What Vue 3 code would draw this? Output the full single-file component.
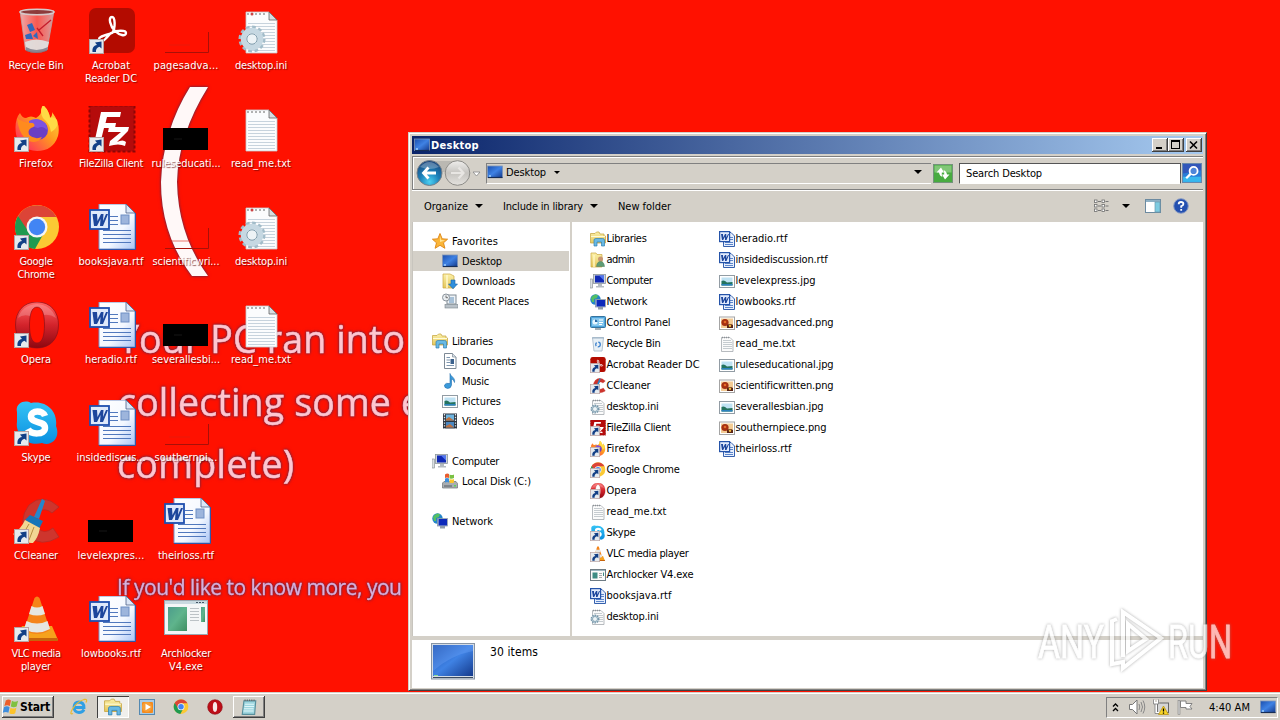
<script setup>
// Sets letter spacing so that a label takes exactly the given width in pixels.
const vFit = (el, { value }) => {
  if (!value) return
  el.style.letterSpacing = '0px'
  const n = el.textContent.length
  const w = el.getBoundingClientRect().width
  el.style.letterSpacing = ((value - w) / n).toFixed(3) + 'px'
}

// icon, shortcut overlay, label lines as [text, width]
const shortcuts = [
  ['bin', 0, [['Recycle Bin', 55]]],
  ['firefox', 1, [['Firefox', 34]]],
  ['chrome', 1, [['Google', 33], ['Chrome', 37]]],
  ['opera', 1, [['Opera', 30]]],
  ['skype', 1, [['Skype', 29]]],
  ['ccleaner', 1, [['CCleaner', 44]]],
  ['vlc', 1, [['VLC media', 49], ['player', 30]]],
  ['acrobat', 1, [['Acrobat', 38], ['Reader DC', 52]]],
  ['filezilla', 1, [['FileZilla Client', 64]]],
  ['word', 0, [['booksjava.rtf', 65]]],
  ['word', 0, [['heradio.rtf', 52]]],
  ['word', 0, [['insidediscus...', 69]]],
  ['black', 0, [['levelexpres...', 67]]],
  ['word', 0, [['lowbooks.rtf', 60]]],
  ['redpic', 0, [['pagesadva...', 65]]],
  ['black', 0, [['ruleseducati...', 69]]],
  ['redpic', 0, [['scientificwri...', 67]]],
  ['black', 0, [['severallesbi...', 68]]],
  ['redpic', 0, [['southernpi...', 63]]],
  ['word', 0, [['theirloss.rtf', 56]]],
  ['exe', 0, [['Archlocker', 50], ['V4.exe', 34]]],
  ['ini', 0, [['desktop.ini', 52]]],
  ['txt', 0, [['read_me.txt', 60]]],
  ['ini', 0, [['desktop.ini', 52]]],
  ['txt', 0, [['read_me.txt', 60]]],
]

const nav = [
  [['star', 'Favorites', 46], ['monitor', 'Desktop', 40, 1], ['downloads', 'Downloads', 53, 1], ['recent', 'Recent Places', 67, 1]],
  [['libs', 'Libraries', 41], ['docs', 'Documents', 54, 1], ['music', 'Music', 27, 1], ['pics', 'Pictures', 39, 1], ['video', 'Videos', 32, 1]],
  [['computer', 'Computer', 47], ['disk', 'Local Disk (C:)', 69, 1]],
  [['network', 'Network', 41]],
]

const files = [
  [
    ['libs', 'Libraries', 40], ['user', 'admin', 28], ['computer', 'Computer', 46], ['network', 'Network', 41],
    ['cpanel', 'Control Panel', 64], ['sbin', 'Recycle Bin', 54], ['acrobat', 'Acrobat Reader DC', 93, 1],
    ['ccleaner', 'CCleaner', 44, 1], ['sini', 'desktop.ini', 52], ['filezilla', 'FileZilla Client', 64, 1],
    ['firefox', 'Firefox', 34, 1], ['chrome', 'Google Chrome', 73, 1], ['opera', 'Opera', 30, 1],
    ['stxt', 'read_me.txt', 60], ['skype', 'Skype', 29, 1], ['vlc', 'VLC media player', 82, 1],
    ['sexe', 'Archlocker V4.exe', 87], ['sword', 'booksjava.rtf', 65], ['sini', 'desktop.ini', 52],
  ],
  [
    ['sword', 'heradio.rtf', 52], ['sword', 'insidediscussion.rtf', 92], ['pics', 'levelexpress.jpg', 80],
    ['sword', 'lowbooks.rtf', 60], ['png', 'pagesadvanced.png', 98], ['stxt', 'read_me.txt', 60],
    ['pics', 'ruleseducational.jpg', 98], ['png', 'scientificwritten.png', 98], ['pics', 'severallesbian.jpg', 88],
    ['png', 'southernpiece.png', 91], ['sword', 'theirloss.rtf', 56],
  ],
]
</script>

<template>
  <div class="screen">
    <svg class="defs" width="0" height="0">
      <defs>
        <linearGradient id="gMon" x1="0" y1="0" x2="1" y2="1"><stop offset="0" stop-color="#1b4fae" /><stop offset=".5" stop-color="#3f82e4" /><stop offset="1" stop-color="#153a8c" /></linearGradient>
        <linearGradient id="gPage" x1="0" y1="0" x2="1" y2="1"><stop offset="0" stop-color="#fff" /><stop offset=".6" stop-color="#f4f8ff" /><stop offset="1" stop-color="#a9c4f5" /></linearGradient>
        <linearGradient id="gOpera" x1="0" y1="0" x2="0" y2="1"><stop offset="0" stop-color="#f66" /><stop offset=".5" stop-color="#d3232b" /><stop offset="1" stop-color="#8d0710" /></linearGradient>
        <linearGradient id="gFox" x1="1" y1="0" x2="0" y2="1"><stop offset="0" stop-color="#ffe14a" /><stop offset=".45" stop-color="#ff9a1f" /><stop offset=".8" stop-color="#ff4450" /><stop offset="1" stop-color="#e8208a" /></linearGradient>
        <linearGradient id="gSky" x1="0" y1="0" x2="0" y2="1"><stop offset="0" stop-color="#35c3f5" /><stop offset="1" stop-color="#0a8fe0" /></linearGradient>
        <linearGradient id="gFold" x1="0" y1="0" x2="0" y2="1"><stop offset="0" stop-color="#fbf0a8" /><stop offset="1" stop-color="#e5c75c" /></linearGradient>
        <linearGradient id="gBin" x1="0" y1="0" x2="1" y2="0"><stop offset="0" stop-color="#e9e2e6" stop-opacity=".75" /><stop offset=".5" stop-color="#f0b0b4" stop-opacity=".45" /><stop offset="1" stop-color="#c9d0d6" stop-opacity=".75" /></linearGradient>
        <linearGradient id="gGreen" x1="0" y1="0" x2="1" y2="1"><stop offset="0" stop-color="#4c9d8c" /><stop offset=".5" stop-color="#5fb48c" /><stop offset="1" stop-color="#3f8f62" /></linearGradient>
        <radialGradient id="gBack" cx=".5" cy=".85" r=".8"><stop offset="0" stop-color="#4cd0f2" /><stop offset=".5" stop-color="#1c7fb8" /><stop offset="1" stop-color="#1d4a80" /></radialGradient>
        <linearGradient id="gFwd" x1="0" y1="0" x2="0" y2="1"><stop offset="0" stop-color="#efeeec" /><stop offset=".5" stop-color="#c6c4c0" /><stop offset="1" stop-color="#e4e2de" /></linearGradient>
      </defs>

      <symbol id="lnk" viewBox="0 0 15 15"><rect x=".5" y=".5" width="14" height="14" fill="#e6eaee" stroke="#b9a3a3" /><path d="M3.500 13C3 9 4.500 6.500 8 6L6 3.500 12.500 2.500 12.500 9.500 10.500 7.800C8 8.500 6.500 10.500 7 13Z" fill="#123f86" /></symbol>

      <symbol id="bin" viewBox="0 0 48 48">
        <path d="M7 3L12.500 42Q23 47 34 42L41 3Z" fill="url(#gBin)" stroke="#b9a4a6" stroke-width=".8" />
        <path d="M12 34Q23 29 36 34L34 42Q23 46 13 42Z" fill="#dfe6e4" opacity=".9" />
        <path d="M13 39Q23 45 35 39L34 43Q23 47 13 43Z" fill="#667" opacity=".7" />
        <ellipse cx="24" cy="4" rx="17" ry="2.800" fill="#8d3b3b" stroke="#d5c9ca" stroke-width="1.600" />
        <path d="M14 17L19 15 22 22 17 24ZM12 27L18 25 20 31 13 31ZM20 28L24 24 25 31Z" fill="#3069bd" /><path d="M26 22L38 12M24 20L30 28" stroke="#c51c2c" stroke-width="1.300" />
      </symbol>

      <symbol id="firefox" viewBox="0 0 48 48">
        <path d="M7 7Q9 12 13 12Q18 9 23 12Q29 9 30 -1Q36 5 37 12Q40 9 39 6Q48 18 45 30Q40 45 24 45Q6 44 3 28Q1 14 7 7Z" fill="url(#gFox)" />
        <path d="M30 -1Q26 5 30 12Q37 18 38 26Q46 22 44 14Q41 10 37 12Q36 4 30 -1Z" fill="#ffdb45" />
        <circle cx="25" cy="24" r="10" fill="#6b3fc4" /><path d="M16 15Q25 10 33 18L35 25Q30 19 25 22Q19 20 16 21Z" fill="#7c52e0" />
        <path d="M4 12Q10 17 20 17Q24 20 18 22Q14 25 16 29Q22 34 29 31Q25 38 16 35Q6 30 4 12Z" fill="#ff8b1e" />
      </symbol>

      <symbol id="chrome" viewBox="0 0 48 48">
        <circle cx="24" cy="23" r="22" fill="#fbc934" />
        <path d="M24 23L5 12A22 22 0 0 0 22 45L32 27Z" fill="#1f9a50" />
        <path d="M5 12A22 22 0 0 1 43.500 13H24L15 27Z" fill="#dc4437" />
        <circle cx="24" cy="23" r="10.500" fill="#f5f5f5" /><circle cx="24" cy="23" r="8.200" fill="#4285f4" />
      </symbol>

      <symbol id="opera" viewBox="0 0 48 48">
        <path fill-rule="evenodd" d="M24 0C38 0 45.500 10 45.500 23S38 46 24 46 2.500 36 2.500 23 10 0 24 0ZM24 5C18.500 5 16.500 13 16.500 23S18.500 41 24 41 31.500 33 31.500 23 29.500 5 24 5Z" fill="url(#gOpera)" stroke="#8c1018" stroke-width=".7" />
        <path d="M5 16Q9 3 24 2Q38 3 43 16Q37 12 31 13Q29 5 24 5Q18 5 17 14Q10 12 5 16Z" fill="#fff" opacity=".2" />
      </symbol>
      <symbol id="opera16" viewBox="0 0 16 16"><circle cx="8" cy="8" r="7.300" fill="#bd0e18" stroke="#8c0810" stroke-width=".6" /><ellipse cx="8" cy="8" rx="2.200" ry="4.900" fill="#f8e8e8" /></symbol>

      <symbol id="skype" viewBox="0 0 48 48">
        <path d="M4 12C2 4 11 -1 18 3C34 0 45 12 43 26C48 38 38 47 29 43C14 47 2 34 4 22Z" fill="url(#gSky)" />
        <path d="M32 16C30 10 18 10 18 16.500C18 24 32 20 32 28C32 35 18 35 15 29" fill="none" stroke="#fff" stroke-width="6.500" />
      </symbol>

      <symbol id="ccleaner" viewBox="0 0 48 48">
        <path d="M46 9Q30 -6 16 7Q4 23 15 38Q28 50 46 39L40 30Q31 37 25 30Q20 21 26 14Q32 9 39 15Z" fill="#ce352d" stroke="#b92a24" stroke-width=".8" />
        <path d="M29 1L32 3 26 21 21 19Z" fill="#2486cc" /><path d="M17 17L30 23 26 31 12 22Z" fill="#1775b8" />
        <path d="M12 22Q8 31 0 36Q10 46 20 45Q25 40 27 30Z" fill="#f2d794" /><path d="M16 26L9 38M21 29L16 42" stroke="#b78d41" stroke-width="1" />
      </symbol>

      <symbol id="vlc" viewBox="0 0 48 48">
        <path d="M9 30L3 44H45L39 30Z" fill="#f6a21c" /><path d="M3 42H44.500L45 45H3Z" fill="#c7640c" />
        <path d="M21.500 2Q24 -1 26.500 2L37 34Q24 42 11 34Z" fill="#f5841a" />
        <path d="M18.500 10Q24 13 29.500 10L32 18Q24 21 16 18ZM13.500 25Q24 30 34.500 25L37 33Q24 40 11 33Z" fill="#e6e6e2" />
      </symbol>

      <symbol id="acrobat" viewBox="0 0 48 48">
        <rect x="1" y="0" width="46" height="45" rx="7" fill="#b30b00" />
        <path d="M12 32C8 29 19 27 24 25C28 20 27 9 24 9C20 9 22 18 27 23C31 27 38 29 38 25C38 22 29 22 23 25C18 30 14 36 12 32Z" fill="none" stroke="#fff" stroke-width="2.400" />
      </symbol>

      <symbol id="filezilla" viewBox="0 0 48 48">
        <rect x="1.500" y="-.5" width="45" height="46" fill="#b50b0b" stroke="#8d0606" stroke-width="2" stroke-dasharray="3 2" />
        <path d="M13 6H33L32 11H19L17.500 17H28L27 22H16L12 38H6Z" fill="#fff" />
        <path d="M21 21H41L40 25 29 36Q35 33 38 36L37 40Q31 37 21 40L22 35 33 26H20Z" fill="#fff" />
      </symbol>

      <symbol id="word" viewBox="0 0 48 48">
        <path d="M11 0H38L47 9V45H11Z" fill="url(#gPage)" stroke="#7a94c8" /><path d="M38 0V9H47Z" fill="#dce6f6" stroke="#4c5f88" stroke-width=".8" /><path d="M11 45.500H47.500V9" fill="none" stroke="#2e58ab" />
        <path d="M22 12.500H30M22 16.500H30M22 20.500H30M15 26.500H43M15 30.500H43M15 34.500H43M15 38.500H43" stroke="#5078bd" /><rect x="33" y="11" width="8" height="9" fill="#9db5dc" stroke="#6f8fc4" />
        <rect x="2" y="6" width="19" height="19" fill="#dfe9fb" stroke="#1f4fae" stroke-width="1.800" />
        <path d="M4.500 10H9L9.500 17 13 10H15.500L15 17 18 10H20L15 22H12L12.500 15 9 22H6Z" fill="#1d469c" />
      </symbol>

      <symbol id="txt" viewBox="0 0 48 48">
        <path d="M8 4H31L39 12V45H8Z" fill="#fbfcfd" stroke="#c5c9cc" stroke-width=".8" /><path d="M31 4V12H39Z" fill="#d8dcdf" stroke="#555" stroke-width=".7" />
        <path d="M10 15.500H37M10 18.500H37M10 21.500H37M10 24.500H37M10 27.500H37M10 30.500H37M10 33.500H37M10 36.500H37M10 39.500H37M10 42.500H37" stroke="#c7d3dd" />
        <path d="M10 5V7M14 5V7M18 5V7M22 5V7M26 5V7" stroke="#999" stroke-width="1.500" />
      </symbol>
      <symbol id="ini" viewBox="0 0 48 48">
        <use href="#txt" width="48" height="48" /><circle cx="14" cy="6" r="1.500" fill="#c44" />
        <circle cx="14" cy="31" r="11.500" fill="none" stroke="#a2bcc9" stroke-width="4" stroke-dasharray="3.500 2.500" /><circle cx="14" cy="31" r="8.500" fill="none" stroke="#c6d8e2" stroke-width="5.500" /><circle cx="14" cy="31" r="5.200" fill="#edf3f6" stroke="#7f9dad" />
      </symbol>
      <symbol id="black" viewBox="0 0 48 48"><rect x="0" y="22" width="45" height="22" /><path d="M11 33H19" stroke="#171717" /></symbol>
      <symbol id="redpic" viewBox="0 0 48 48"><path d="M45.500 24V44.500H2" fill="none" stroke="#a81008" /><path d="M6 37H27" stroke="#dc2012" stroke-width="1.500" opacity=".4" /></symbol>
      <symbol id="exe" viewBox="0 0 48 48">
        <rect x="1.500" y="4.500" width="43" height="34" fill="#f4f6f7" stroke="#9aa5ae" /><rect x="2" y="5" width="42" height="3" fill="#c9d9e0" /><path d="M33 6.500H42" stroke="#456" stroke-dasharray="2 1" />
        <rect x="5" y="11" width="19" height="24" fill="url(#gGreen)" /><path d="M27 12.500H36M27 15.500H36M27 18.500H36M27 21.500H36M27 24.500H36" stroke="#bcc2c6" /><rect x="38" y="11" width="4" height="15" fill="url(#gGreen)" />
      </symbol>

      <symbol id="monitor" viewBox="0 0 16 16"><rect x=".5" y="2" width="15" height="11.500" fill="url(#gMon)" stroke="#7f96b8" stroke-width=".8" /><path d="M1 13.500H15.500" stroke="#162d55" stroke-width="1.200" /><path d="M2 12H4" stroke="#9fd0ff" stroke-width="1.500" /></symbol>
      <symbol id="star" viewBox="0 0 16 16"><path d="M8 .5L10.200 5.800 15.600 6.200 11.500 9.800 12.900 15.300 8 12.300 3.100 15.300 4.500 9.800 .4 6.200 5.800 5.800Z" fill="#fbb638" stroke="#dc8414" stroke-width=".9" /><path d="M8 3L9 7 13 7.500 8 9Z" fill="#ffe69a" /></symbol>
      <symbol id="downloads" viewBox="0 0 16 16"><path d="M1 1H8L12 3V15H1Z" fill="url(#gFold)" stroke="#caa640" stroke-width=".7" /><path d="M5 2V15" stroke="#fff8cf" stroke-width="1.500" /><path d="M9 7H13V11H15.500L11 15.800 6.500 11H9Z" fill="#2f8fdd" stroke="#1a62a5" stroke-width=".6" /></symbol>
      <symbol id="recent" viewBox="0 0 16 16"><rect x="5" y="2" width="9" height="9" fill="#eef3f7" stroke="#808b95" /><path d="M7 5H12M7 7H12M7 9H12" stroke="#608eb8" /><rect x="3" y="11.500" width="13" height="3.500" fill="#b9c1c8" stroke="#7b858d" stroke-width=".6" /><circle cx="4" cy="4.500" r="3.500" fill="#e9edf0" stroke="#8b949c" /><path d="M4 2.500V4.700H6" fill="none" stroke="#555" stroke-width=".8" /></symbol>
      <symbol id="libs" viewBox="0 0 16 16"><path d="M.5 2.500H5L6.500 1H9L10 3H14V5H15.500V12H.5Z" fill="url(#gFold)" stroke="#c9a949" stroke-width=".8" /><path d="M1 5.500H15" stroke="#fffbd8" /><path d="M4 15V9Q4 7.500 6 7.500H12.500Q14.500 7.500 14.500 9V15H11.500V11H7V15Z" fill="#68b9e4" stroke="#3180b2" stroke-width=".7" /></symbol>
      <symbol id="docs" viewBox="0 0 16 16"><path d="M2.500 .5H10.500L14 4V15.500H2.500Z" fill="#fff" stroke="#7d8995" /><path d="M10.500 .5V4H14" fill="#d8e0e8" stroke="#7d8995" stroke-width=".7" /><path d="M4.500 4.500H8M4.500 7H8M4.500 9.500H8M4.500 12.500H12" stroke="#7e97b0" /><rect x="8.500" y="6" width="3.500" height="5" fill="#3b618c" /></symbol>
      <symbol id="music" viewBox="0 0 16 16"><path d="M8 .5C9 4 13.500 4.500 12.500 9.500Q11.500 6 9.500 6V12Q9 15.500 5.500 15.500Q2 15 2.500 12Q3.500 9.500 8 10.500Z" fill="#3b9ada" stroke="#236fae" stroke-width=".6" /></symbol>
      <symbol id="pics" viewBox="0 0 16 16"><rect x=".5" y="2.500" width="15" height="12" fill="#fff" stroke="#929ca4" /><rect x="2.500" y="4.500" width="11" height="8" fill="#bfe2f3" /><path d="M2.500 8Q5 6.500 8 9.500L13.500 9V12.500H2.500Z" fill="#24735d" /><path d="M2.500 11H13.500V12.500H2.500Z" fill="#2c82bf" /></symbol>
      <symbol id="video" viewBox="0 0 16 16"><rect x="1" y=".5" width="14" height="15" fill="#2d3540" /><path d="M2.500 1V15.500M13.500 1V15.500" stroke="#e3e9ee" stroke-width="1.300" stroke-dasharray="1.400 1.400" /><rect x="4" y="1.500" width="8" height="6" fill="#6eb4df" /><rect x="4" y="9" width="8" height="5.500" fill="#4a88c2" /><path d="M4 6L7 4 12 7.500H4ZM4 13L8 11 12 14.500H4Z" fill="#bf713f" /></symbol>
      <symbol id="computer" viewBox="0 0 16 16"><rect x="0" y="6" width="2.500" height="9" fill="#dce0e3" stroke="#7d858b" stroke-width=".6" /><rect x="3.500" y="1.500" width="12" height="9" fill="#ced5da" stroke="#8d969d" stroke-width=".8" /><rect x="5" y="2.500" width="9" height="7" fill="#1029b5" /><path d="M9 2.500H14V7.500Z" fill="#5277ef" /><path d="M8 11H12V13H14V14.500H6V13H8Z" fill="#b5bcc1" /></symbol>
      <symbol id="network" viewBox="0 0 16 16"><circle cx="5.500" cy="5.500" r="5.200" fill="#2484c9" /><path d="M1 4Q4 -1 8 1L7 4 4 5 4 8 2 8ZM6 6L9 5V9Z" fill="#54c064" /><rect x="5.500" y="5.500" width="10" height="7.500" fill="#d0dae2" stroke="#8190a0" stroke-width=".7" /><rect x="6.500" y="6" width="8.500" height="6.500" fill="#0d2abb" /><path d="M8 13H13V15.500H8Z" fill="#8f9cab" /></symbol>
      <symbol id="disk" viewBox="0 0 16 16"><path d="M.5 10L2 8.500H14L15.500 10.500V15H.5Z" fill="#a9adb1" stroke="#6c7276" stroke-width=".7" /><path d="M2 13H10" stroke="#555d62" /><rect x="12" y="12" width="2" height="1.500" fill="#59d854" /><path d="M3 1.500Q5 0 7 1V5Q5 4 3 5Z" fill="#e95c2e" /><path d="M7.500 1.500Q10 2.500 12 1.500V5Q10 6 7.500 5.500Z" fill="#7ac143" /><path d="M3 5.500Q5 4.500 7 5.500V9.500Q5 8.500 3 9.500Z" fill="#3c8fdd" /><path d="M7.500 6Q10 7 12 6V9.500Q10 10.500 7.500 9.500Z" fill="#fcc52b" /></symbol>
      <symbol id="user" viewBox="0 0 16 16"><path d="M1 1H6L7 2.500H12V15H1Z" fill="url(#gFold)" stroke="#caa640" stroke-width=".7" /><path d="M4 3V15" stroke="#fff6c0" stroke-width="1.500" /><circle cx="10.500" cy="7" r="2.500" fill="#c99570" /><path d="M6.500 14.500Q7 9.500 10.500 9.500T14.500 14.500Z" fill="#5e9c76" stroke="#4a7c5e" stroke-width=".5" /></symbol>
      <symbol id="cpanel" viewBox="0 0 16 16"><rect x=".5" y="1.500" width="15" height="11" rx="1" fill="#4fa4dc" stroke="#35749f" /><rect x="2" y="3" width="12" height="8" fill="#85c7ee" /><circle cx="5" cy="7" r="2.500" fill="#e8f6ff" /><path d="M5 7V4.500A2.500 2.500 0 0 1 7.500 7Z" fill="#2869a5" /><path d="M9 5H13M9 7.500H13M9 9.500H12" stroke="#fff" /><path d="M5 13H11V15H5Z" fill="#a3aeb6" /></symbol>
      <symbol id="sbin" viewBox="0 0 16 16"><path d="M2.500 1.500L4 15H12L13.500 1.500Z" fill="#e8f0f6" stroke="#b4c4d2" /><path d="M2 2H14" stroke="#9db2c4" /><circle cx="8" cy="8.500" r="2.300" fill="none" stroke="#3f83cf" stroke-width="1.300" stroke-dasharray="3.500 1.500" /></symbol>
      <symbol id="stxt" viewBox="0 0 16 16"><path d="M2.500 1.500H11L14 4.500V15.500H2.500Z" fill="#fbfbfb" stroke="#a5aaae" stroke-width=".8" /><path d="M4 4.500H12M4 6.500H13M4 8.500H13M4 10.500H13M4 12.500H13" stroke="#b9c0c5" stroke-width=".8" /><path d="M3 1.500H11" stroke="#8c9196" stroke-dasharray="1 1" stroke-width="1.500" /></symbol>
      <symbol id="sini" viewBox="0 0 16 16"><use href="#stxt" width="16" height="16" /><circle cx="5" cy="10" r="3.600" fill="#eef5f8" stroke="#7596aa" stroke-width="1.700" stroke-dasharray="1.500 .8" /><circle cx="5" cy="10" r="2.500" fill="#eef4f7" stroke="#86a5b6" /></symbol>
      <symbol id="sword" viewBox="0 0 16 16"><path d="M4.500 1.500H12L15.500 5V15.500H4.500Z" fill="#e7effd" stroke="#3560ad" /><path d="M10 6.500H14M10 8.500H14M6 11.500H14M6 13.500H14" stroke="#5d86ca" /><rect x=".6" y=".6" width="10" height="10" fill="#e2ebfd" stroke="#2453a9" stroke-width="1.200" /><path d="M2 3H4L4.200 6.500 6 3H7.300V6.500L9 3H10L7.500 9H6V5.800L4.200 9H3Z" fill="#1d469c" /></symbol>
      <symbol id="sexe" viewBox="0 0 16 16"><rect x=".5" y="2.500" width="15" height="11" fill="#fbfbfb" stroke="#6f7c84" /><path d="M1 3.500H15" stroke="#9eb7c2" /><rect x="2.500" y="5.500" width="5" height="6" fill="#3d8c84" /><path d="M9 6.500H12M9 8.500H12M9 10.500H12" stroke="#aaa" /><path d="M13.500 5.500V9" stroke="#3d8c84" /></symbol>
      <symbol id="png" viewBox="0 0 16 16"><rect x=".5" y="2" width="15" height="12.500" fill="#fff" stroke="#a4a4a4" /><rect x="2" y="3.500" width="12" height="9.500" fill="#f3cb94" /><circle cx="6" cy="7.500" r="3.600" fill="#a52f12" /><circle cx="6" cy="7" r="1.300" fill="#e46c27" /><path d="M8 10Q11 8 14 10V13H8Z" fill="#5a2414" /><circle cx="11" cy="10.800" r="1.200" fill="#f2ba3b" /></symbol>

      <symbol id="flag4" viewBox="0 0 18 18"><path d="M4 2Q7 0 9.500 2L8.300 8Q5.500 6.500 2.500 8Z" fill="#ec5f2b" /><path d="M10.500 2.500Q13.500 4.500 17 2.500L15.500 8.500Q12.500 10 9.300 8.500Z" fill="#7fc142" /><path d="M2.200 9Q5.500 7.500 8 9.200L6.800 15Q4 13.500 .8 15Z" fill="#3e8edd" /><path d="M9 9.700Q12 11.500 15.200 9.700L14 15.500Q11 17.300 7.800 15.500Z" fill="#fcc32a" /></symbol>
      <symbol id="ie" viewBox="0 0 18 18"><path d="M14 11.500Q12.500 14.500 9 14.500Q4 14 4 9Q4.500 4 9 4Q14 4.500 14 9.500H5" fill="none" stroke="#2f9fe4" stroke-width="2.800" /><path d="M3 15.500Q-1 17 2.500 11Q7 3.500 14 1.500Q18 .5 16 4.500" fill="none" stroke="#e8ba32" stroke-width="1.300" /></symbol>
      <symbol id="wmp" viewBox="0 0 16 16"><rect x=".5" y=".5" width="15" height="15" fill="#aacbe5" stroke="#5489b1" /><rect x="3" y="3" width="11" height="11" rx="1" fill="#f48b1f" /><circle cx="8" cy="8" r="5" fill="#f79f38" /><path d="M6.500 4.800L12 8 6.500 11.200Z" fill="#fff" /></symbol>
      <symbol id="pad" viewBox="0 0 16 16"><path d="M3.500 2.500H14L13 14.500H2Z" fill="#9ed6df" stroke="#588f9c" /><path d="M4.500 5.500H12.500M4 7.500H12.500M3.500 9.500H12M3 11.500H12" stroke="#dff6f9" /><path d="M4 2H14" stroke="#666" stroke-dasharray="1 1" stroke-width="1.500" /></symbol>
      <symbol id="help" viewBox="0 0 16 16"><circle cx="8" cy="8" r="7.300" fill="#2450b0" stroke="#8a9cc4" /><path d="M5.700 6.300Q5.700 4 8 4T10.400 6Q10.400 7.200 8.200 8.200V9.800M8.200 11V12.800" fill="none" stroke="#fff" stroke-width="1.800" /></symbol>
    </svg>

    <div class="wallpaper glow">
      <svg viewBox="0 0 1280 720">
        <path class="paren" d="M190 87H208Q178 135 177 182Q178 235 208 276H192Q161 235 161 182Q163 130 190 87Z" />
        <g class="bsod">
          <text x="118" y="353" textLength="287" font-size="37.500">Your PC ran into</text>
          <text x="118" y="416" textLength="304" font-size="37.500">collecting some e</text>
          <text x="117" y="478" textLength="177" font-size="37.500">complete)</text>
          <text class="small" x="117" y="595" textLength="285" font-size="21">If you'd like to know more, you</text>
        </g>
      </svg>
    </div>

    <main class="desktop">
      <div v-for="(s, i) in shortcuts" :key="i" class="shortcut">
        <svg class="i48" viewBox="0 0 48 48">
          <use :href="'#' + s[0]" width="48" height="48" />
          <use v-if="s[1]" href="#lnk" x="1" y="31" width="15" height="15" />
        </svg>
        <div v-for="l in s[2]" :key="l[0]" class="line"><span v-fit="l[1]">{{ l[0] }}</span></div>
      </div>
    </main>

    <section class="window">
      <header class="title">
        <svg class="i16"><use href="#monitor" /></svg>
        <b v-fit="48">Desktop</b>
        <div class="caption">
          <button class="min"><i /></button>
          <button class="max"><i /></button>
          <button class="close"><svg viewBox="0 0 9 8"><path d="M1 .5L8 7.500M8 .5L1 7.500" /></svg></button>
        </div>
      </header>

      <div class="navbar">
        <svg class="arrows" viewBox="0 0 70 30">
          <rect x="14" y="3" width="30" height="11" fill="#bab8b2" />
          <circle cx="14.500" cy="15" r="12.500" fill="url(#gBack)" stroke="#747f8a" /><path d="M13.500 9.500L8.500 15 13.500 20.500M9 15H21" fill="none" stroke="#fff" stroke-width="2.800" />
          <path d="M5 9Q14 -1 24 9Q15 13 5 9Z" fill="#fff" opacity=".28" />
          <circle cx="42.500" cy="15" r="12.300" fill="url(#gFwd)" stroke="#8d8c88" /><path d="M43.500 9.500L48.500 15 43.500 20.500M48 15H36" fill="none" stroke="#e8e6e3" stroke-width="2.200" />
          <path d="M58 14H65L61.500 18Z" fill="#fff" stroke="#858585" stroke-width=".8" />
        </svg>
        <div class="address">
          <svg class="i16"><use href="#monitor" /></svg>
          <span v-fit="40">Desktop</span><i class="tri sm" />
          <i class="tri drop" />
        </div>
        <svg class="refresh" viewBox="0 0 20 19"><rect x=".5" y=".5" width="19" height="18" fill="#48ab40" stroke="#74937b" /><rect x="1.500" y="1.500" width="17" height="7" fill="#9fd595" opacity=".65" /><path d="M8 3.500L3.500 8.500H6Q6.500 12 9.500 13Q8.500 11 8.800 8.500H11ZM12 15.500L16.500 10.500H14Q13.500 7 10.500 6Q11.500 8 11.200 10.500H9Z" fill="#fff" /></svg>
        <div class="search"><span v-fit="76">Search Desktop</span></div>
        <svg class="go" viewBox="0 0 19 19"><rect x=".5" y=".5" width="18" height="18" fill="#2a7dd8" stroke="#6787ad" /><path d="M1 13H18V18H1Z" fill="#38b7ee" /><path d="M1 1H18V7L1 10Z" fill="#3257ba" /><circle cx="11" cy="7.500" r="3.800" fill="#4f86d9" stroke="#fff" stroke-width="1.700" /><path d="M8.200 10.300L4 14.500" stroke="#fff" stroke-width="2.200" /></svg>
      </div>

      <div class="toolbar">
        <span v-fit="44">Organize</span><i class="tri" />
        <span v-fit="80" class="gap">Include in library</span><i class="tri" />
        <span v-fit="53" class="gap">New folder</span>
        <div class="tools">
          <svg class="i16" viewBox="0 0 16 16"><g fill="#fff" stroke="#6e6e6e" stroke-width=".8"><rect x="1.500" y="2" width="2.500" height="2.500" /><rect x="1.500" y="6.500" width="2.500" height="2.500" /><rect x="1.500" y="11" width="2.500" height="2.500" /><rect x="9" y="2" width="2.500" height="2.500" /><rect x="9" y="6.500" width="2.500" height="2.500" /><rect x="9" y="11" width="2.500" height="2.500" /></g><path d="M5 3.500H8M5 8H8M5 12.500H8M12.500 3.500H15.500M12.500 8H15.500M12.500 12.500H15.500" stroke="#777" /></svg>
          <i class="tri" />
          <svg class="i16 pane" viewBox="0 0 16 16"><rect x=".5" y="1.500" width="15" height="13" fill="#fff" stroke="#6c8aa0" /><path d="M1 3H15" stroke="#8fb0c4" stroke-width="2" /><rect x="10" y="4" width="5" height="10" fill="#7ecbe0" stroke="#6a98ac" stroke-width=".7" /></svg>
          <svg class="i16 hp"><use href="#help" /></svg>
        </div>
      </div>

      <div class="body">
        <nav class="side">
          <ul v-for="(g, gi) in nav" :key="gi">
            <li v-for="n in g" :key="n[1]" :class="{ child: n[3], on: n[1] === 'Desktop' }">
              <svg class="i16"><use :href="'#' + n[0]" /></svg><span v-fit="n[2]">{{ n[1] }}</span>
            </li>
          </ul>
        </nav>
        <div class="files">
          <ul v-for="(c, ci) in files" :key="ci">
            <li v-for="(f, fi) in c" :key="fi">
              <svg class="i16" viewBox="0 0 48 48">
                <use :href="'#' + f[0]" width="48" height="48" />
                <use v-if="f[3]" href="#lnk" x="0" y="18" width="30" height="30" />
              </svg><span v-fit="f[2]">{{ f[1] }}</span>
            </li>
          </ul>
        </div>
      </div>

      <footer class="details">
        <svg viewBox="0 0 44 37"><rect x=".5" y=".5" width="43" height="35.500" fill="#d4dce6" stroke="#8794a4" /><rect x="2" y="2" width="40" height="31" fill="url(#gMon)" /><path d="M2 2H42V8Q20 12 2 28Z" fill="#7db0ff" opacity=".28" /><path d="M2 34.500H42" stroke="#3b4a5f" /><path d="M3 32.500H7" stroke="#8bdb9a" /></svg>
        <span v-fit="48">30 items</span>
      </footer>
    </section>

    <footer class="taskbar">
      <button class="start"><svg viewBox="0 0 18 18"><use href="#flag4" /></svg><b v-fit="30">Start</b></button>
      <div class="quick">
        <div class="cell"><svg class="i18"><use href="#ie" /></svg></div>
        <div class="cell pressed"><svg class="i18"><use href="#libs" /></svg></div>
        <div class="cell"><svg class="i16"><use href="#wmp" /></svg></div>
        <div class="cell"><svg class="i16"><use href="#chrome" /></svg></div>
        <div class="cell"><svg class="i16"><use href="#opera16" /></svg></div>
        <div class="cell raised"><svg class="i18"><use href="#pad" /></svg></div>
      </div>
      <div class="tray">
        <svg class="chev" viewBox="0 0 7 9"><path d="M1 3.500L3.500 1 6 3.500M1 8L3.500 5.500 6 8" fill="none" stroke="#000" stroke-width="1.300" /></svg>
        <svg class="i16 t1" viewBox="0 0 16 16"><path d="M.5 5.500H3.500L8 1V15L3.500 10.500H.5Z" fill="#fff" stroke="#777" /><path d="M10 5Q11.500 8 10 11M12 3Q15 8 12 13M14 1.500Q17.500 8 14 14.500" fill="none" stroke="#888" /></svg>
        <svg class="i16 t2" viewBox="0 0 16 16"><rect x="4.500" y="4" width="11" height="9.500" fill="#d5d5d5" stroke="#666" /><path d="M1 1V4H5V1M3 4V14H7" fill="none" stroke="#fff" stroke-width="2.200" /><path d="M.5 .5V5H5.500V.5M2 5V14.500H6" fill="none" stroke="#777" stroke-width=".8" /><path d="M10.500 7L15.500 15.500H5.500Z" fill="#f8d527" stroke="#b38b08" stroke-width=".7" /><path d="M10.500 9.500V12.500M10.500 13.500V14.700" stroke="#000" stroke-width="1.300" /></svg>
        <svg class="i16 t3" viewBox="0 0 16 16"><path d="M2 1V15.500" stroke="#777" stroke-width="2.500" /><path d="M2 1.500V15" stroke="#fff" /><path d="M3.500 2H9V4.500H15L13 7.500 15 10H9V8.500H3.500Z" fill="#fff" stroke="#777" stroke-width=".9" /></svg>
        <span v-fit="41">4:40 AM</span>
        <svg class="i16 t4"><use href="#monitor" /></svg>
      </div>
    </footer>

    <svg class="mark" viewBox="0 0 210 72">
      <text x="8" y="53" textLength="66" lengthAdjust="spacingAndGlyphs">ANY</text>
      <text x="138" y="53" textLength="64" lengthAdjust="spacingAndGlyphs">RUN</text>
      <path d="M93 52V7L131 33 93 63V57L82 59V16L87 14" /><path d="M98 19V46L116 34Z" />
    </svg>
  </div>
</template>

<style>
html, body { margin: 0; overflow: hidden; background: #ff1100; }
</style>

<style scoped>
.screen { position: relative; width: 1280px; height: 720px; overflow: hidden; background: #ff1100; font: 11px/13px "DejaVu Sans Condensed", "DejaVu Sans", "Liberation Sans", sans-serif; font-stretch: condensed; color: #000; cursor: default; }
span, b { white-space: nowrap; }
svg { display: block; flex: none; overflow: visible; }
ul { margin: 0; padding: 0; list-style: none; }
button { border: 0; padding: 0; font: inherit; }
.defs { position: absolute; }
.i16 { width: 16px; height: 16px; }
.i18 { width: 18px; height: 18px; }
.i48 { width: 48px; height: 48px; margin: 0 0 3px 14px; }

.wallpaper { position: absolute; inset: 0; font-family: "Open Sans", "Noto Sans", sans-serif; font-stretch: normal; }
.wallpaper svg { width: 1280px; height: 720px; }
.glow { filter: blur(.7px) drop-shadow(0 0 1px rgba(70, 50, 90, .8)) drop-shadow(0 0 1.500px rgba(110, 30, 60, .6)); }
.paren { fill: #fff8f8; }
.bsod { fill: #ffc6d0; stroke: #ffc6d0; stroke-width: .5; }
.small { fill: #d8b0dc; stroke: #d8b0dc; stroke-width: .3; }

.desktop { position: absolute; left: -1px; top: 0; display: grid; grid-auto-flow: column; grid-template-rows: repeat(7, 98px); grid-auto-columns: 75px; }
.shortcut { padding-top: 8px; color: #fff; text-shadow: 1px 1px 1px rgba(90, 0, 0, .7); }
.line { display: flex; justify-content: center; height: 13px; margin-right: 1px; }

.window { position: absolute; left: 408px; top: 132px; width: 799px; height: 559px; box-sizing: border-box; padding: 3px 2px 2px 3px; display: flex; flex-direction: column; background: #d4d0c8; border: 1px solid #d4d0c8; border-right-color: #404040; border-bottom-color: #404040; box-shadow: inset 1px 1px #fff, inset -1px -1px #808080; }
.title { display: flex; align-items: center; height: 18px; margin-right: 1px; padding-left: 2px; background: linear-gradient(90deg, #0a246a, #a6caf0); color: #fff; }
.title b { margin-left: 1px; }
.caption { display: flex; margin-left: auto; padding-right: 1px; }
.caption button { position: relative; width: 16px; height: 14px; background: #d4d0c8; box-shadow: inset -1px -1px #404040, inset 1px 1px #fff, inset -2px -2px #808080; }
.caption .close { margin-left: 2px; }
.caption svg { width: 9px; height: 8px; margin: -1px 0 0 3px; fill: none; stroke: #000; stroke-width: 1.600; }
.min i { position: absolute; left: 4px; bottom: 3px; width: 6px; height: 2px; background: #000; }
.max i { position: absolute; left: 3px; top: 2px; width: 9px; height: 9px; box-sizing: border-box; border: 1px solid #000; border-top-width: 2px; }
.navbar { display: flex; align-items: center; height: 34px; margin: 2px 1px 0 0; box-sizing: border-box; border: 1px solid #808080; border-right: 0; box-shadow: inset 1px 1px #fff, 0 1px #fff; padding-left: 2px; }
.arrows { width: 70px; height: 30px; }
.address { display: flex; align-items: center; width: 445px; height: 21px; margin-left: 1px; box-sizing: border-box; border: 1px solid #808080; border-right: 0; border-bottom-color: #fff; padding-bottom: 2px; }
.address span { margin-left: 3px; }
.address .drop { margin: 0 9px 0 auto; }
.tri { width: 0; height: 0; border: 4px solid transparent; border-top-color: #000; border-bottom: 0; }
.tri.sm { border-width: 3px 3px 0; margin-left: 8px; }
.refresh { width: 20px; height: 19px; margin-left: 2px; }
.search { display: flex; align-items: center; width: 222px; height: 21px; margin-left: 6px; box-sizing: border-box; padding-left: 6px; background: #fff; border: 1px solid #fff; border-top-color: #555; border-left-color: #555; border-right-color: #555; }
.go { width: 20px; height: 20px; margin-left: 1px; }
.toolbar { display: flex; align-items: center; height: 32px; padding-left: 12px; }
.toolbar .tri { margin-left: 7px; }
.toolbar .gap { margin-left: 20px; }
.tools { display: flex; align-items: center; margin: 0 15px 0 auto; }
.toolbar .tools .tri { margin-left: 13px; }
.pane { margin-left: 15px; }
.hp { margin-left: 12px; }
.body { display: flex; height: 414px; margin-right: 1px; }
.side { width: 158px; padding-top: 9px; box-sizing: border-box; background: #fff; border-right: 1px solid #fff; border-left: 1px solid #c8c5be; }
.side ul { margin-bottom: 20px; }
.side li { display: flex; align-items: center; height: 20px; padding-left: 19px; }
.side li span { margin-left: 4px; }
.side .child { padding-left: 29px; }
.side .on { background: #d4d0c8; }
.files { flex: 1; display: flex; margin-left: 2px; padding: 6px 0 0 18px; background: #fff; }
.files ul { width: 129px; }
.files li { display: flex; align-items: center; height: 21px; }
.files li span { margin-left: .5px; }
.details { display: flex; height: 48px; margin: 4px 1px 0 0; padding-left: 19px; background: #fff; font-size: 12px; }
.details svg { width: 44px; height: 37px; margin-top: 3px; }
.details span { margin: 6px 0 0 15px; align-self: flex-start; }

.taskbar { position: absolute; left: 0; right: 0; top: 692px; height: 28px; box-sizing: border-box; display: flex; align-items: center; padding: 2px 2px 0; background: #d4d0c8; box-shadow: inset 0 1px #d4d0c8, inset 0 2px #fff; }
.start { display: flex; align-items: center; width: 52px; height: 22px; padding-left: 0; box-sizing: border-box; background: #d4d0c8; box-shadow: inset -1px -1px #404040, inset 1px 1px #fff, inset -2px -2px #808080; font-size: 12px; }
.start svg { width: 17px; height: 18px; }
.start b { margin-left: 1px; }
.quick { display: flex; margin-left: 8px; }
.cell { width: 34px; height: 22px; display: flex; align-items: center; justify-content: center; }
.pressed { width: 32px; margin: 0 1px; background: #f0efec; box-shadow: inset 1px 1px #404040, inset -1px -1px #fff; }
.raised { width: 32px; margin-left: 1px; box-shadow: inset -1px -1px #404040, inset 1px 1px #fff, inset -2px -2px #808080; }
.tray { display: flex; align-items: center; width: 172px; height: 21px; margin-left: auto; box-sizing: border-box; padding-left: 5px; border: 1px solid #808080; border-right-color: #fff; border-bottom-color: #fff; }
.chev { width: 7px; height: 9px; }
.t1 { margin-left: 10px; }
.t2, .t3 { margin-left: 8px; }
.tray span { margin-left: 16px; }
.t4 { margin-left: 10px; }

.mark { position: absolute; left: 1030px; top: 605px; width: 210px; height: 72px; font: 46px "Liberation Sans Narrow", Roboto, sans-serif; fill: #fff; stroke: #fff; stroke-width: .8; opacity: .7; filter: drop-shadow(0 0 1.500px #888); }
.mark path { fill: none; stroke-width: 4; }
</style>
